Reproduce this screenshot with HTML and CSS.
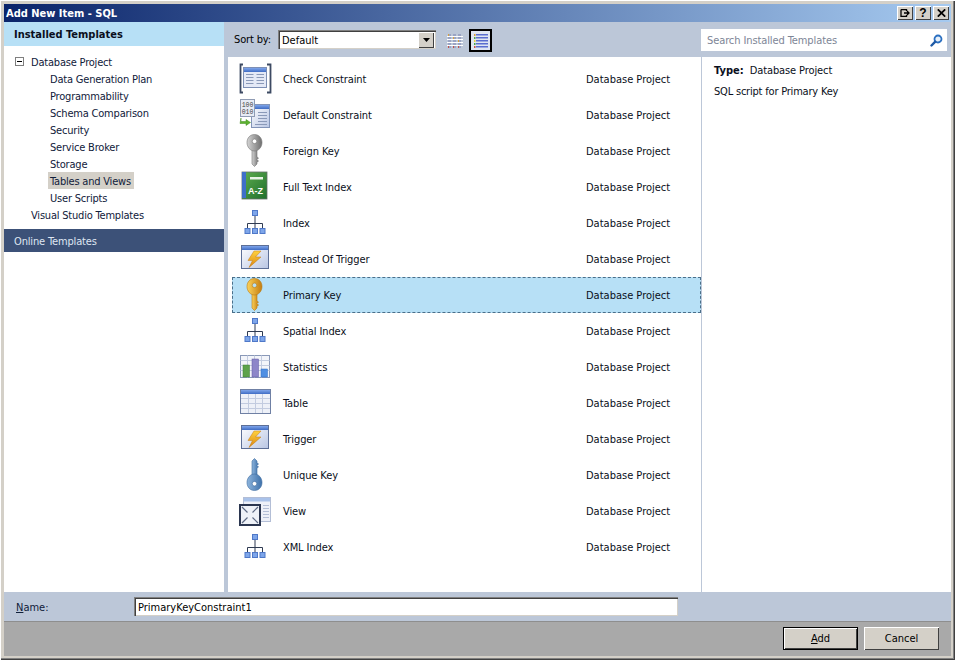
FILE: index.html
```html
<!DOCTYPE html>
<html lang="en">
<head>
<meta charset="utf-8">
<title>Add New Item - SQL</title>
<link rel="stylesheet" href="styles.css">
</head>
<body>
<svg class="defs" width="0" height="0" aria-hidden="true">
  <defs>
    <linearGradient id="bodyGrad" x1="0" y1="0" x2="1" y2="1"><stop offset="0" stop-color="#ffffff"/><stop offset="1" stop-color="#b9c6e4"/></linearGradient>
    <linearGradient id="titleGrad" x1="0" y1="0" x2="0" y2="1"><stop offset="0" stop-color="#7fa5ea"/><stop offset="1" stop-color="#3f6cc4"/></linearGradient>
    <linearGradient id="greyKey" x1="0" y1="0" x2="1" y2="0"><stop offset="0" stop-color="#d4d4d4"/><stop offset="1" stop-color="#6f6f6f"/></linearGradient>
    <linearGradient id="goldKey" x1="0" y1="0" x2="1" y2="0"><stop offset="0" stop-color="#fbd25a"/><stop offset="1" stop-color="#c47d10"/></linearGradient>
    <linearGradient id="blueKey" x1="0" y1="0" x2="1" y2="0"><stop offset="0" stop-color="#8db4dc"/><stop offset="1" stop-color="#3f72ab"/></linearGradient>
    <linearGradient id="greenBook" x1="0" y1="0" x2="1" y2="1"><stop offset="0" stop-color="#5fae4f"/><stop offset="1" stop-color="#1f6f2c"/></linearGradient>
    <linearGradient id="boltGrad" x1="0" y1="0" x2="0" y2="1"><stop offset="0" stop-color="#ffd23f"/><stop offset="1" stop-color="#d98512"/></linearGradient>
    <g id="hier">
      <path d="M18 11V18.500M10.500 23V18.500H25.500V23M18 18.500V23" fill="none" stroke="#2f3b52" stroke-width="1"/>
      <rect x="15.500" y="5.500" width="5" height="5" fill="#7ea6ea" stroke="#4f78c8"/>
      <rect x="8" y="23.500" width="5" height="5" fill="#7ea6ea" stroke="#4f78c8"/>
      <rect x="15.500" y="23.500" width="5" height="5" fill="#7ea6ea" stroke="#4f78c8"/>
      <rect x="23" y="23.500" width="5" height="5" fill="#7ea6ea" stroke="#4f78c8"/>
    </g>
    <g id="trig">
      <rect x="4.500" y="4.500" width="27" height="23" fill="url(#bodyGrad)" stroke="#5d6f96"/>
      <rect x="5" y="5" width="26" height="4" fill="url(#titleGrad)"/>
      <path d="M24 10H17L11 19.500H15.500L12 26.500L24 16H18.500Z" fill="url(#boltGrad)" stroke="#c77d14" stroke-width=".5"/>
    </g>
    <g id="keyDown">
      <path d="M15 16H20V24L21.500 25L20 26.500L21.500 28L20 29.500V31L17.500 33.500L15 31Z"/>
      <path d="M17.500 1.500C21.800 1.500 25 4.800 25 9.500C25 14 21.800 18 17.500 18C13.200 18 10 14 10 9.500C10 4.800 13.200 1.500 17.500 1.500ZM17.500 6A2.300 2.300 0 1 0 17.500 10.600A2.300 2.300 0 1 0 17.500 6Z" fill-rule="evenodd"/>
    </g>
  </defs>
</svg>

<div class="window">
  <header class="titlebar">
    <span class="title">Add New Item - SQL</span>
    <div class="title-buttons">
      <span class="tbtn">
        <svg width="10" height="8" viewBox="0 0 10 8"><path d="M1 .5H6.500V2M1 .5V7.500H6.500V6M4 4H9M7 2L9 4L7 6" fill="none" stroke="#000" stroke-width="1.300"/></svg>
      </span>
      <span class="tbtn tbtn-help">?</span>
      <span class="tbtn">
        <svg width="9" height="8" viewBox="0 0 9 8"><path d="M.8 .3L8.200 7.700M8.200 .3L.8 7.700" stroke="#000" stroke-width="1.700"/></svg>
      </span>
    </div>
  </header>

  <div class="main">
    <aside class="sidebar">
      <div class="side-head">Installed Templates</div>
      <ul class="tree">
        <li class="tree-row tree-l1"><span class="expander"></span><span class="tree-text">Database Project</span></li>
        <li class="tree-row tree-l2"><span class="tree-text">Data Generation Plan</span></li>
        <li class="tree-row tree-l2"><span class="tree-text">Programmability</span></li>
        <li class="tree-row tree-l2"><span class="tree-text">Schema Comparison</span></li>
        <li class="tree-row tree-l2"><span class="tree-text">Security</span></li>
        <li class="tree-row tree-l2"><span class="tree-text">Service Broker</span></li>
        <li class="tree-row tree-l2"><span class="tree-text">Storage</span></li>
        <li class="tree-row tree-l2"><span class="tree-text tree-sel">Tables and Views</span></li>
        <li class="tree-row tree-l2"><span class="tree-text">User Scripts</span></li>
        <li class="tree-row tree-l1b"><span class="tree-text">Visual Studio Templates</span></li>
      </ul>
      <div class="side-online">Online Templates</div>
    </aside>

    <section class="content">
      <div class="toolbar">
        <span class="sort-label">Sort by:</span>
        <div class="combo">
          <span class="combo-text">Default</span>
          <span class="combo-btn"><svg width="7" height="4" viewBox="0 0 7 4"><path d="M0 0H7L3.500 4Z" fill="#000"/></svg></span>
        </div>
        <span class="view-btn view-btn-off">
          <svg width="16" height="16" viewBox="0 0 16 16">
            <g fill="#9aa4c4"><rect x="1" y="1" width="3" height="14"/><rect x="6" y="1" width="3" height="14"/><rect x="11" y="1" width="3" height="14"/></g>
            <g stroke="#fff" stroke-width="1"><path d="M0 3.500H16M0 6.500H16M0 9.500H16M0 12.500H16"/></g>
            <g fill="#d9a13a"><rect x="1" y="1" width="1" height="2"/><rect x="6" y="4" width="1" height="2"/><rect x="11" y="7" width="1" height="2"/></g>
            <g fill="#c2524a"><rect x="1" y="13" width="1" height="2"/><rect x="6" y="13" width="1" height="2"/><rect x="11" y="13" width="1" height="2"/></g>
          </svg>
        </span>
        <span class="view-btn view-btn-on">
          <svg width="16" height="16" viewBox="0 0 16 16">
            <g fill="#5a6ed0"><rect x="3" y="1" width="12" height="1.500"/><rect x="3" y="4" width="12" height="1.500"/><rect x="3" y="7" width="12" height="1.500"/><rect x="3" y="10" width="12" height="1.500"/><rect x="3" y="13" width="12" height="1.500"/></g>
            <rect x="1" y="1" width="1.500" height="2" fill="#d9a13a"/><rect x="1" y="4" width="1.500" height="2" fill="#4fa64a"/><rect x="1" y="7" width="1.500" height="2" fill="#e8d14a"/><rect x="1" y="10" width="1.500" height="2" fill="#4fa64a"/><rect x="1" y="13" width="1.500" height="2" fill="#c2524a"/>
          </svg>
        </span>
        <div class="search">
          <span class="search-text">Search Installed Templates</span>
          <svg width="13" height="13" viewBox="0 0 13 13"><circle cx="8" cy="5" r="3.500" fill="#e6f0fb" stroke="#2a6fc0" stroke-width="1.800"/><path d="M5.300 7.700L1.500 11.500" stroke="#1f5aa6" stroke-width="2.400" stroke-linecap="round"/></svg>
        </div>
      </div>

      <div class="panes">
        <div class="list">
          <div class="item">
            <svg class="icon" viewBox="0 0 36 36">
              <rect x="6.500" y="6.500" width="23" height="20" fill="#e4e9f6" stroke="#7d8fb5"/>
              <rect x="7" y="7" width="22" height="4" fill="url(#titleGrad)"/>
              <path d="M9 13.500H16.500M9 16.500H16.500M9 19.500H16.500M9 22.500H16.500M19.500 13.500H27M19.500 16.500H27M19.500 19.500H27M19.500 22.500H27" stroke="#8a99b8"/>
              <path d="M6 3.500H3.500V31.500H6M30 3.500H33.500V31.500H30" fill="none" stroke="#3d4a63" stroke-width="1.800"/>
            </svg>
            <span class="item-name">Check Constraint</span><span class="item-type">Database Project</span>
          </div>
          <div class="item">
            <svg class="icon" viewBox="0 0 36 36">
              <rect x="14.500" y="7.500" width="18" height="23" fill="url(#bodyGrad)" stroke="#8294b8"/>
              <rect x="15" y="8" width="17" height="4" fill="url(#titleGrad)"/>
              <path d="M21 15.500H30M21 18.500H30M21 21.500H30M21 24.500H30M18 27.500H30" stroke="#8a99b8"/>
              <rect x="3.500" y="2.500" width="14" height="17" fill="#e7ebf4" stroke="#8f9bb3"/>
              <text class="bin" x="10.500" y="9.500">100</text>
              <text class="bin" x="10.500" y="16.500">010</text>
              <path d="M4 21V24.500H9V22.500L13.500 25.500L9 28.500V26.500H3Z" fill="#5cb22f" stroke="#3f8a1d" stroke-width=".5"/>
            </svg>
            <span class="item-name">Default Constraint</span><span class="item-type">Database Project</span>
          </div>
          <div class="item">
            <svg class="icon" viewBox="0 0 36 36"><use href="#keyDown" fill="url(#greyKey)" stroke="#777" stroke-width=".6"/></svg>
            <span class="item-name">Foreign Key</span><span class="item-type">Database Project</span>
          </div>
          <div class="item">
            <svg class="icon" viewBox="0 0 36 36">
              <rect x="5" y="3" width="25" height="27" fill="url(#greenBook)" stroke="#64706a" stroke-width=".8"/>
              <rect x="5" y="3" width="4" height="26" fill="#3f6fc9"/>
              <rect x="13" y="8" width="13" height="2.500" fill="#e8f3e6"/>
              <text class="az" x="18.500" y="25">A-Z</text>
            </svg>
            <span class="item-name">Full Text Index</span><span class="item-type">Database Project</span>
          </div>
          <div class="item">
            <svg class="icon" viewBox="0 0 36 36"><use href="#hier"/></svg>
            <span class="item-name">Index</span><span class="item-type">Database Project</span>
          </div>
          <div class="item">
            <svg class="icon" viewBox="0 0 36 36"><use href="#trig"/></svg>
            <span class="item-name">Instead Of Trigger</span><span class="item-type">Database Project</span>
          </div>
          <div class="item item-sel">
            <svg class="icon" viewBox="0 0 36 36"><use href="#keyDown" fill="url(#goldKey)" stroke="#b87a14" stroke-width=".6"/></svg>
            <span class="item-name">Primary Key</span><span class="item-type">Database Project</span>
          </div>
          <div class="item">
            <svg class="icon" viewBox="0 0 36 36"><use href="#hier"/></svg>
            <span class="item-name">Spatial Index</span><span class="item-type">Database Project</span>
          </div>
          <div class="item">
            <svg class="icon" viewBox="0 0 36 36">
              <rect x="3.500" y="6.500" width="29" height="22" fill="#f3f5fa" stroke="#8a99b8"/>
              <path d="M3.500 11.500H32.500M3.500 16.500H32.500M3.500 21.500H32.500M10.500 6.500V28.500M17.500 6.500V28.500M24.500 6.500V28.500" stroke="#c3cce0"/>
              <rect x="6" y="16" width="6.500" height="12" fill="#5da24b" stroke="#3e7f31" stroke-width=".5"/>
              <rect x="15" y="10" width="6.500" height="18" fill="#8d86c9" stroke="#5f58a3" stroke-width=".5"/>
              <rect x="24" y="20" width="6.500" height="8" fill="#4f8fe3" stroke="#2f6ec4" stroke-width=".5"/>
            </svg>
            <span class="item-name">Statistics</span><span class="item-type">Database Project</span>
          </div>
          <div class="item">
            <svg class="icon" viewBox="0 0 36 36">
              <rect x="3.500" y="4.500" width="30" height="24" fill="#eef1f8" stroke="#6f80a4"/>
              <rect x="4" y="5" width="29" height="4" fill="url(#titleGrad)"/>
              <path d="M4 13.500H33M4 18.500H33M4 23.500H33M11.500 9V28M18.500 9V28M25.500 9V28" stroke="#c3cce0"/>
            </svg>
            <span class="item-name">Table</span><span class="item-type">Database Project</span>
          </div>
          <div class="item">
            <svg class="icon" viewBox="0 0 36 36"><use href="#trig"/></svg>
            <span class="item-name">Trigger</span><span class="item-type">Database Project</span>
          </div>
          <div class="item">
            <svg class="icon" viewBox="0 0 36 36"><use href="#keyDown" transform="matrix(1 0 0 -1 0 35)" fill="url(#blueKey)" stroke="#3e6c9f" stroke-width=".6"/></svg>
            <span class="item-name">Unique Key</span><span class="item-type">Database Project</span>
          </div>
          <div class="item">
            <svg class="icon" viewBox="0 0 36 36">
              <rect x="6.500" y="4.500" width="27" height="24" fill="#edf0f8" stroke="#b3bed6"/>
              <rect x="7" y="5" width="26" height="3.500" fill="#a9c2ea"/>
              <path d="M26 12.500H32M26 15.500H32M26 18.500H32M26 21.500H32M26 24.500H32" stroke="#b3bed6"/>
              <rect x="3" y="12" width="20" height="20" fill="#eff2f8" stroke="#2b3650" stroke-width="2"/>
              <path d="M5 14L10.500 19.500M21 14L15.500 19.500M5 30L10.500 24.500M21 30L15.500 24.500" stroke="#5e6a84" stroke-width="1.200"/>
            </svg>
            <span class="item-name">View</span><span class="item-type">Database Project</span>
          </div>
          <div class="item">
            <svg class="icon" viewBox="0 0 36 36"><use href="#hier"/></svg>
            <span class="item-name">XML Index</span><span class="item-type">Database Project</span>
          </div>
        </div>
        <div class="details">
          <p class="detail-type"><b>Type:</b><span>Database Project</span></p>
          <p class="detail-desc">SQL script for Primary Key</p>
        </div>
      </div>
    </section>
  </div>

  <div class="name-row">
    <label class="name-label"><u>N</u>ame:</label>
    <div class="name-input">PrimaryKeyConstraint1</div>
  </div>
  <div class="buttons">
    <button class="btn btn-default"><u>A</u>dd</button>
    <button class="btn">Cancel</button>
  </div>
</div>
</body>
</html>
```

FILE: styles.css
```css
* { box-sizing: border-box; }
html, body { margin: 0; padding: 0; }
body {
  width: 955px;
  height: 660px;
  overflow: hidden;
  font-family: "DejaVu Sans Condensed", "DejaVu Sans", sans-serif;
  font-stretch: condensed;
  font-size: 11px;
  color: #000;
  background: #d4d0c8;
}
.defs { position: absolute; }
.window {
  width: 955px;
  height: 660px;
  padding: 4px;
  display: flex;
  flex-direction: column;
  background: #d4d0c8;
  box-shadow: inset 1px 1px 0 #fff, inset -1px -1px 0 #404040, inset -2px -2px 0 #808080;
}
.titlebar {
  height: 18px;
  flex: none;
  display: flex;
  align-items: center;
  justify-content: space-between;
  padding: 0 3px 0 2px;
  background: linear-gradient(90deg, #0a246a 0%, #a6caf0 100%);
}
.title { color: #fff; font-weight: bold; font-size: 11px; }
.title-buttons { display: flex; gap: 2px; margin-right: -1px; }
.tbtn {
  width: 16px;
  height: 14px;
  display: flex;
  align-items: center;
  justify-content: center;
  background: #d4d0c8;
  box-shadow: inset 1px 1px 0 #fff, inset -1px -1px 0 #404040;
}
.tbtn-help { font-weight: bold; font-size: 12px; font-family: "Liberation Sans", sans-serif; }
.main { flex: 1; min-height: 0; display: flex; }
.sidebar { width: 220px; flex: none; display: flex; flex-direction: column; background: #fff; }
.side-head {
  height: 24px;
  flex: none;
  padding: 1px 10px 0;
  line-height: 23px;
  font-weight: bold;
  background: #b7e0f6;
  color: #0a0f20;
}
.tree { list-style: none; margin: 0; padding: 7px 0 6px; }
.tree-row { height: 17px; line-height: 19px; white-space: nowrap; color: #10203a; }
.tree-l1 { padding-left: 11px; display: flex; align-items: center; }
.tree-l1b { padding-left: 27px; }
.tree-l2 { padding-left: 44px; }
.tree-text { display: inline-block; padding: 0 2px; height: 17px; letter-spacing: -.2px; }
.tree-l1 .tree-text, .tree-l1b .tree-text { padding: 0; }
.tree-sel { background: #d4d0c8; padding-right: 3px; }
.expander {
  position: relative;
  width: 9px;
  height: 9px;
  margin-right: 7px;
  border: 1px solid #7f7f7f;
  background: #fff;
}
.expander::after {
  content: "";
  position: absolute;
  left: 1px;
  top: 3px;
  width: 5px;
  height: 1px;
  background: #000;
}
.side-online {
  height: 23px;
  flex: none;
  padding: 2px 10px 0;
  line-height: 21px;
  color: #dfe6f2;
  background: #3c5178;
  letter-spacing: -.15px;
}
.content { flex: 1; min-width: 0; display: flex; flex-direction: column; background: #bcc7d8; }
.toolbar { height: 35px; flex: none; display: flex; align-items: flex-start; padding-left: 10px; }
.sort-label { margin-top: 11px; width: 44px; flex: none; line-height: 14px; letter-spacing: -.15px; }
.combo {
  margin-top: 8px;
  width: 158px;
  flex: none;
  height: 19px;
  display: flex;
  align-items: center;
  justify-content: space-between;
  padding: 2px 2px 1px;
  background: #fff;
  box-shadow: inset 1px 1px 0 #808080, inset 2px 2px 0 #404040, inset -1px -1px 0 #d4d0c8;
}
.combo-text { padding-left: 2px; }
.combo-btn {
  width: 16px;
  height: 16px;
  display: flex;
  align-items: center;
  justify-content: center;
  background: #d4d0c8;
  box-shadow: inset 1px 1px 0 #fff, inset -1px -1px 0 #404040;
}
.view-btn {
  margin-top: 7px;
  width: 23px;
  height: 23px;
  flex: none;
  display: flex;
  align-items: center;
  justify-content: center;
}
.view-btn-off { margin-left: 7px; }
.view-btn-on { border: 2px solid #000; background: #dfe6f3; margin-left: 3px; }
.search {
  margin: 7px 0 0 209px;
  width: 246px;
  flex: none;
  height: 22px;
  display: flex;
  align-items: center;
  justify-content: space-between;
  padding: 0 4px 0 6px;
  background: #fff;
}
.search-text { color: #7d8596; letter-spacing: -.1px; }
.panes { flex: 1; min-height: 0; display: flex; }
.list { width: 473px; flex: none; margin-left: 4px; padding-top: 4px; background: #fff; }
.item {
  height: 36px;
  margin-left: 4px;
  display: flex;
  align-items: center;
  padding-left: 5px;
  color: #0a0f20;
}
.item-sel { background: #b7e0f6; outline: 1px dashed #4a6f8a; outline-offset: -1px; }
.icon { width: 36px; height: 36px; flex: none; margin-right: 10px; }
.item-name { width: 303px; flex: none; letter-spacing: -.1px; }
.bin { font-family: "Liberation Mono", monospace; font-size: 6.500px; text-anchor: middle; fill: #444; }
.az { font-family: "Liberation Sans", sans-serif; font-weight: bold; font-size: 9px; text-anchor: middle; fill: #fff; }
.details { flex: 1; margin-left: 1px; padding: 7px 12px; background: #fff; color: #0a0f20; }
.detail-type { margin: 0; height: 14px; line-height: 14px; }
.detail-type span { margin-left: 6px; letter-spacing: -.1px; }
.detail-desc { margin: 7px 0 0; line-height: 14px; letter-spacing: -.2px; }
.name-row {
  height: 29px;
  flex: none;
  display: flex;
  align-items: center;
  background: #bcc7d8;
  padding-left: 12px;
}
.name-label { width: 118px; padding-top: 2px; color: #10203a; }
.name-input {
  width: 544px;
  height: 19px;
  padding: 3px 4px 0;
  line-height: 15px;
  background: #fff;
  box-shadow: inset 1px 1px 0 #808080, inset 2px 2px 0 #404040, inset -1px -1px 0 #d4d0c8;
}
.buttons {
  height: 35px;
  flex: none;
  display: flex;
  justify-content: flex-end;
  align-items: flex-start;
  gap: 6px;
  padding: 6px 12px 0 0;
  background: #a9a9a9;
  box-shadow: inset 0 1px 0 #8e8e8e;
}
.btn {
  width: 75px;
  height: 23px;
  padding: 0;
  border: 0;
  font: inherit;
  font-stretch: condensed;
  color: #000;
  background: #d4d0c8;
  box-shadow: inset 1px 1px 0 #fff, inset -1px -1px 0 #404040;
}
.btn-default { box-shadow: inset 0 0 0 1px #000, inset 2px 2px 0 #fff, inset -2px -2px 0 #404040; }
```
